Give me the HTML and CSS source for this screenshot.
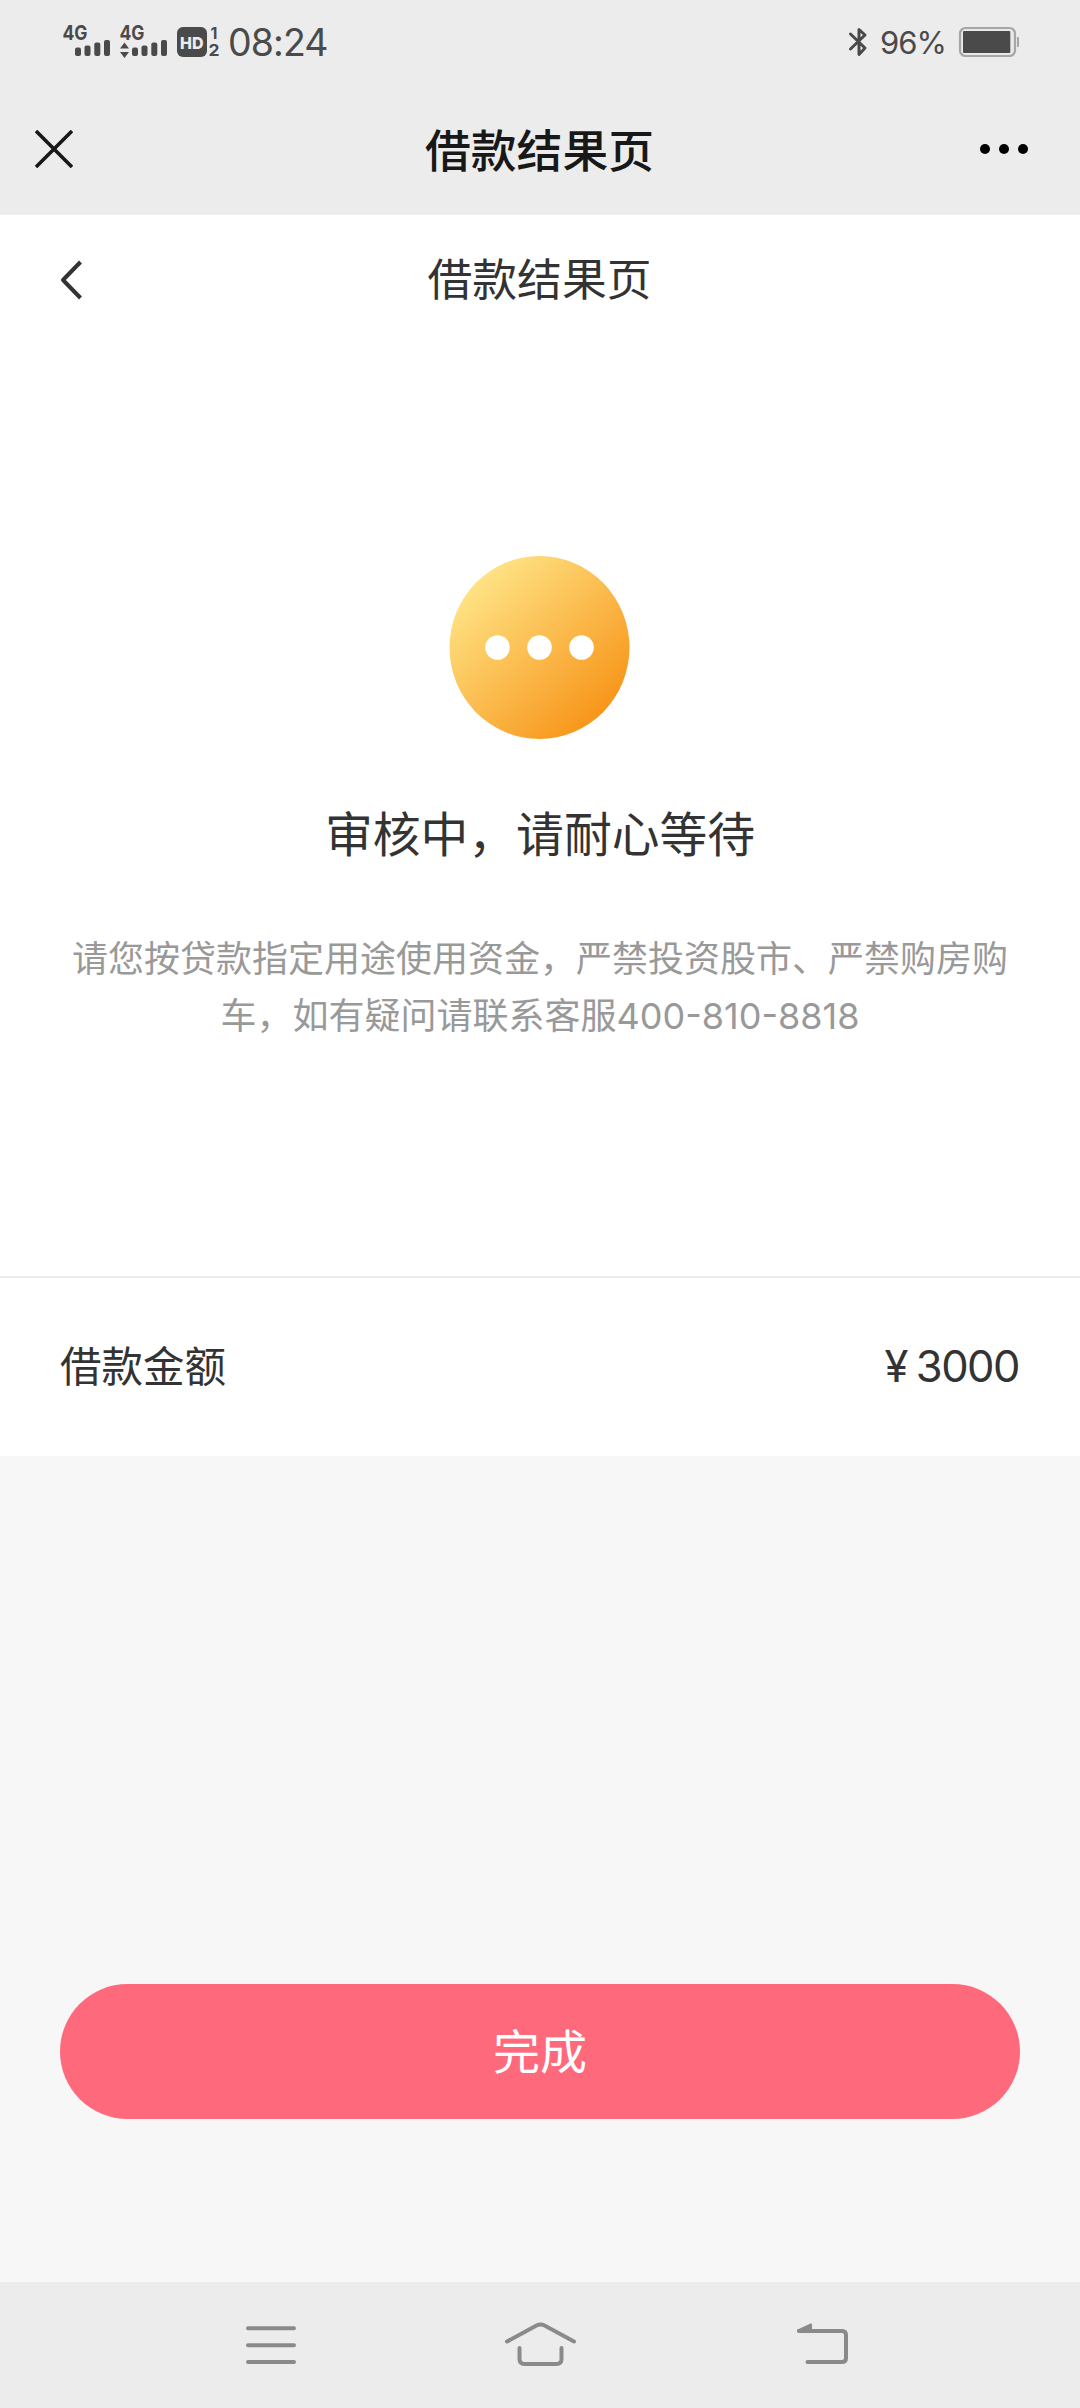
FILE: index.html
```html
<!DOCTYPE html>
<html lang="zh-CN">
<head>
<meta charset="utf-8">
<title>借款结果页</title>
<link rel="stylesheet" href="styles.css">
</head>
<body>
<div class="screen">
  <div class="status-bar">
    <svg class="signals" width="160" height="40" viewBox="60 20 160 40" fill="#4a4a4a">
      <text class="net" x="62.5" y="39.5" textLength="25" lengthAdjust="spacingAndGlyphs">4G</text>
      <rect x="75" y="47.5" width="6" height="8.5" rx="2"/>
      <rect x="84.5" y="45.5" width="6" height="10.5" rx="2"/>
      <rect x="94.3" y="42.5" width="6" height="13.5" rx="2"/>
      <rect x="104" y="40" width="6" height="16" rx="2"/>
      <text class="net" x="119.5" y="39.5" textLength="25" lengthAdjust="spacingAndGlyphs">4G</text>
      <path d="M124.5 42.5l4.5 6h-9zM124.5 58l4.5-6h-9z"/>
      <rect x="132" y="47.5" width="6" height="8.5" rx="2"/>
      <rect x="141.5" y="45.5" width="6" height="10.5" rx="2"/>
      <rect x="151.3" y="42.5" width="6" height="13.5" rx="2"/>
      <rect x="161" y="40" width="6" height="16" rx="2"/>
      <rect x="177" y="27" width="30" height="30" rx="6"/>
      <text class="hd" x="180" y="48.5" textLength="23.5" lengthAdjust="spacingAndGlyphs">HD</text>
      <text class="sim" x="210.5" y="38.7">1</text>
      <text class="sim" x="208.5" y="56" textLength="11" lengthAdjust="spacingAndGlyphs">2</text>
    </svg>
    <span class="time">08:24</span>
    <svg class="bluetooth" width="20" height="32" viewBox="850 26 20 32" fill="none" stroke="#4a4a4a" stroke-width="3" stroke-linejoin="round" stroke-linecap="round">
      <path d="M852.5 34l14.5 14-6 6.500V29.500l6 5.500-14.500 14"/>
    </svg>
    <span class="percent">96%</span>
    <svg class="battery" width="62" height="32" viewBox="959 26 62 32">
      <rect x="961" y="28" width="55" height="28" rx="5.500" fill="#e9e9e9" stroke="#a6a6a6" stroke-width="2.200"/>
      <rect x="964" y="31" width="47.300" height="22" rx="1" fill="#4a4a4a"/>
      <path d="M1018 37h1q1 0 1 1v8q0 1-1 1h-1z" fill="#a6a6a6"/>
    </svg>
  </div>
  <header class="app-bar">
    <svg width="38" height="38" viewBox="0 0 38 38" stroke="#181818" stroke-width="3.600" fill="none"><path d="M1 1l36 36M37 1L1 37"/></svg>
    <h1 class="app-title">借款结果页</h1>
    <svg width="50" height="12" viewBox="0 0 50 12" fill="#000"><circle cx="6" cy="6" r="5"/><circle cx="25" cy="6" r="5"/><circle cx="44" cy="6" r="5"/></svg>
  </header>
  <header class="page-bar">
    <svg width="24" height="40" viewBox="0 0 24 40" stroke="#333" stroke-width="4" fill="none" stroke-linejoin="round"><path d="M20.500 2L3 20l17.500 18"/></svg>
    <h2 class="page-title">借款结果页</h2>
  </header>
  <main class="result">
    <svg class="waiting" width="182" height="184" viewBox="0 0 182 184">
      <defs><linearGradient id="amber" x1=".14" y1=".12" x2=".86" y2=".9"><stop offset="0" stop-color="#ffe486"/><stop offset="1" stop-color="#f79316"/></linearGradient></defs>
      <ellipse cx="90.500" cy="92.500" rx="90" ry="91.500" fill="url(#amber)"/>
      <g fill="#fff"><circle cx="48.500" cy="92.500" r="12.300"/><circle cx="90.500" cy="92.500" r="12.300"/><circle cx="132.500" cy="92.500" r="12.300"/></g>
    </svg>
    <h3 class="state">审核中，请耐心等待</h3>
    <p class="notice">请您按贷款指定用途使用资金，严禁投资股市、严禁购房购车，如有疑问请联系客服400-810-8818</p>
  </main>
  <section class="amount-row">
    <span class="label">借款金额</span>
    <span class="amount"><span class="yen">¥</span>3000</span>
  </section>
  <section class="actions">
    <button class="done">完成</button>
  </section>
  <nav class="nav-bar">
    <svg width="80" height="50" viewBox="231 2320 80 50"><path d="M248 2328.200h46M248 2345.200h46M248 2362h46"/></svg>
    <svg width="80" height="50" viewBox="507.500 2320 80 50"><path d="M507.500 2341.500L537 2325.500q4-2 8 0L574.500 2341.500M520 2348v11q0 5 5 5h32q5 0 5-5v-11"/></svg>
    <svg width="80" height="50" viewBox="783 2320 80 50"><path d="M800 2331h43q4 0 4 4v23q0 4-4 4h-34.500"/><path class="tip" d="M799 2330.500l13-6v6z"/></svg>
  </nav>
</div>
</body>
</html>
```
FILE: styles.css
```css
* { box-sizing: border-box; }
body, h1, h2, h3, p { margin: 0; }
body {
  background: #f7f7f7;
  font-family: "Noto Sans CJK SC", sans-serif;
  color: #333;
}
.screen {
  width: 1080px;
  height: 2408px;
  display: flex;
  flex-direction: column;
  overflow: hidden;
}
.status-bar {
  height: 84px;
  padding: 0 60px 0 60px;
  background: #ececec;
  display: flex;
  align-items: center;
  color: #4a4a4a;
  font-family: Inter, sans-serif;
}
.status-bar svg { flex: none; margin-bottom: 4px; }
.status-bar .bluetooth, .status-bar .battery { margin-bottom: 1px; }
.net { font: 700 20px Inter, sans-serif; }
.hd { font: 800 16.500px Inter, sans-serif; fill: #ececec; }
.sim { font: 700 16px Inter, sans-serif; }
.time {
  padding-top: 1px;
  font-size: 37.500px;
  line-height: 84px;
  letter-spacing: -0.900px;
  margin-left: 8px;
  margin-right: auto;
}
.percent {
  width: 67px;
  margin: 0 11px 0 12px;
  padding-top: 2px;
  font-size: 31px;
  line-height: 82px;
  letter-spacing: -1px;
  white-space: nowrap;
}
.app-bar {
  height: 131px;
  padding: 0 51px 0 35px;
  background: #ececec;
  border-bottom: 1px solid #f0f0f0;
  display: grid;
  grid-template-columns: 65px 1fr 50px;
  align-items: center;
}
.app-title {
  padding-bottom: 2px;
  font-size: 45.800px;
  font-weight: 500;
  line-height: 68px;
  color: #181818;
  text-align: center;
}
.page-bar {
  height: 130px;
  padding: 0 61px 0 60px;
  background: #fff;
  display: grid;
  grid-template-columns: 24px 1fr 24px;
  align-items: center;
}
.page-title {
  padding-bottom: 6px;
  font-size: 44.800px;
  font-weight: 400;
  line-height: 66px;
  text-align: center;
}
.result {
  height: 931px;
  padding: 210px 70px 0;
  background: #fff;
  display: flex;
  flex-direction: column;
  align-items: center;
}
.state {
  margin-top: 58px;
  font-size: 47.800px;
  font-weight: 400;
  line-height: 70px;
}
.notice {
  width: 940px;
  margin-top: 64px;
  font-family: Inter, "Noto Sans CJK SC", sans-serif;
  font-size: 36px;
  line-height: 57px;
  text-align: center;
  color: #999;
}
.amount-row {
  height: 180px;
  padding: 0 60px;
  background: #fff;
  border-top: 2px solid #ececec;
  display: flex;
  justify-content: space-between;
  align-items: center;
}
.label { padding-bottom: 7px; font-size: 41.500px; }
.amount {
  padding: 0 1px 3px 0;
  font-family: Inter, sans-serif;
  font-size: 43.500px;
  letter-spacing: -1.500px;
}
.yen { margin-right: 9px; }
.actions {
  flex: 1;
  padding: 528px 60px 0;
}
.done {
  display: block;
  width: 960px;
  height: 135px;
  padding: 0 0 6px;
  border: 0;
  border-radius: 68px;
  background: #ff697c;
  color: #fff;
  font: 400 47px/129px "Noto Sans CJK SC", sans-serif;
}
.nav-bar {
  height: 126px;
  padding: 0 218px 0 231px;
  background: #ececec;
  display: flex;
  justify-content: space-between;
  align-items: center;
}
.nav-bar svg { overflow: visible; }
.nav-bar path {
  fill: none;
  stroke: #8a8a8a;
  stroke-width: 4;
  stroke-linecap: round;
  stroke-linejoin: round;
}
.nav-bar .tip { fill: #8a8a8a; stroke-width: 2; }
```
